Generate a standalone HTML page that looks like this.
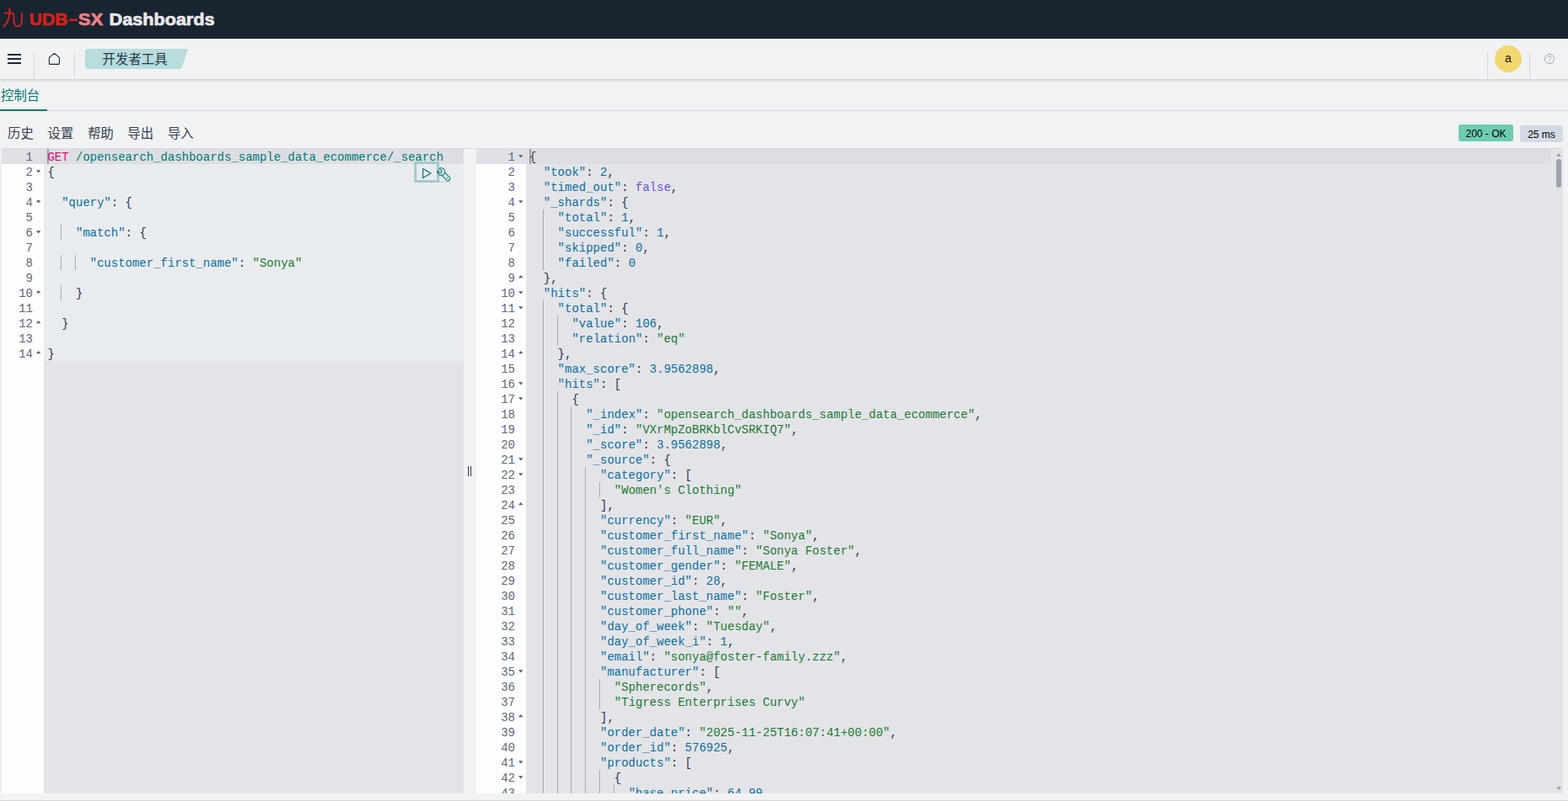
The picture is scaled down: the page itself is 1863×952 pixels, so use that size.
<!DOCTYPE html><html><head><meta charset="utf-8"><title>Dev Tools</title><style>

*{box-sizing:border-box;margin:0;padding:0}
html,body{width:1863px;height:952px;overflow:hidden;background:#f1f2f4;font-family:"Liberation Sans",sans-serif}
.abs{position:absolute}
#top{left:0;top:0;width:1863px;height:46px;background:#192431}
#hdr{left:0;top:46px;width:1863px;height:48px;background:#f1f2f4;box-shadow:0 1px 0 #d3d7dc,0 2px 2px rgba(80,100,110,.13),0 3px 3px rgba(80,100,110,.04)}
.sep{width:1px;background:#d5d8df;top:62px;height:32px}
svg{position:absolute;left:0;top:0;overflow:visible}
.code{font-family:"Liberation Mono",monospace;font-size:14px;line-height:18px;white-space:pre;color:#2b3648}
.code i{font-style:normal}
.ln{position:absolute;height:18px;left:0}
.k{color:#0b6e9e}.n{color:#0b6e9e}.s{color:#1c7a2e}.b{color:#6a55d5}.p{color:#2b3648}.m{color:#dd0a73}.u{color:#00797a}
.gn{position:absolute;text-align:right;color:#606876;height:18px}
.badge{position:absolute;font-size:12px;line-height:22px;height:20px;overflow:hidden;border-radius:3px;color:#000;text-align:center}

</style></head><body>
<div id="top" class="abs"></div>
<div id="hdr" class="abs"></div>
<div class="abs sep" style="left:40px"></div>
<div class="abs sep" style="left:88px"></div>
<div class="abs sep" style="left:1767px"></div>
<div class="abs sep" style="left:1817px"></div>
<div class="abs" style="left:0;top:131px;width:1863px;height:1px;background:#d6dae1"></div>
<div class="abs" style="left:0;top:130px;width:56px;height:2px;background:#00776e"></div>
<svg width="1863" height="952" viewBox="0 0 1863 952">
<path fill="#b8dddc" d="M105 58 H221.6 Q223.8 58 223 60.2 L216.2 79.4 Q215.2 82 212.4 82 H105 Q101 82 101 78 V62 Q101 58 105 58Z"/>
<text x="121.4" y="75.8" font-size="15.5" fill="#2a3a4c" font-family="&quot;Liberation Sans&quot;, &quot;Noto Sans CJK SC&quot;, sans-serif">开发者工具</text>
<text x="1" y="118.7" font-size="15.4" fill="#007a72" font-family="&quot;Liberation Sans&quot;, &quot;Noto Sans CJK SC&quot;, sans-serif">控制台</text>
<text x="9" y="163.5" font-size="15.4" fill="#343f4f" font-family="&quot;Liberation Sans&quot;, &quot;Noto Sans CJK SC&quot;, sans-serif">历史</text>
<text x="56.5" y="163.5" font-size="15.4" fill="#343f4f" font-family="&quot;Liberation Sans&quot;, &quot;Noto Sans CJK SC&quot;, sans-serif">设置</text>
<text x="104.2" y="163.5" font-size="15.4" fill="#343f4f" font-family="&quot;Liberation Sans&quot;, &quot;Noto Sans CJK SC&quot;, sans-serif">帮助</text>
<text x="151.6" y="163.5" font-size="15.4" fill="#343f4f" font-family="&quot;Liberation Sans&quot;, &quot;Noto Sans CJK SC&quot;, sans-serif">导出</text>
<text x="199.2" y="163.5" font-size="15.4" fill="#343f4f" font-family="&quot;Liberation Sans&quot;, &quot;Noto Sans CJK SC&quot;, sans-serif">导入</text>
<path fill="none" stroke="#d4211b" stroke-width="1.9" stroke-linecap="round" stroke-linejoin="round" d="M11.4 10.2 C11.4 18.5 10.8 26 4.3 31.4 M5.6 15.6 H14.2 C16 15.6 16.2 16.4 16.2 18 C16.2 22 16.2 24 16.7 26.6 C17.4 30 19 31.4 20.6 31.4 C24.6 31.4 26 28.5 26 24 V15.4"/>
<text x="34.8" y="30" font-size="20.7" font-weight="bold" fill="#d4211b" stroke="#d4211b" stroke-width="0.7" stroke-linejoin="round" textLength="45.6" lengthAdjust="spacingAndGlyphs" font-family="&quot;Liberation Sans&quot;, sans-serif">UDB</text>
<rect x="82.3" y="22.4" width="9.7" height="2.6" fill="#d4211b"/>
<text x="93" y="30" font-size="20.7" font-weight="bold" fill="#f07f87" stroke="#f07f87" stroke-width="0.7" stroke-linejoin="round" textLength="29.3" lengthAdjust="spacingAndGlyphs" font-family="&quot;Liberation Sans&quot;, sans-serif">SX</text>
<text x="129.8" y="30" font-size="20.7" font-weight="bold" fill="#e9e9e9" stroke="#e9e9e9" stroke-width="0.7" stroke-linejoin="round" textLength="125.2" lengthAdjust="spacingAndGlyphs" font-family="&quot;Liberation Sans&quot;, sans-serif">Dashboards</text>
<path fill="#1b2a3b" d="M9 64h16v2H9zM9 69h16v2H9zM9 74h16v2H9z"/>
<path fill="none" stroke="#1b2a3b" stroke-width="1.1" stroke-linejoin="round" d="M58.5 68.4 L64.5 63.4 L70.5 68.4 V75.4 Q70.5 76.4 69.5 76.4 H59.5 Q58.5 76.4 58.5 75.4 Z"/>
<circle cx="1792" cy="70" r="16" fill="#f1d86f"/>
<circle cx="1841" cy="70" r="5.6" fill="none" stroke="#a3abb6" stroke-width="1"/>
<path fill="none" stroke="#a3abb6" stroke-width="1" stroke-linecap="round" d="M1839.2 68.3 C1839.2 66.4 1842.9 66.4 1842.9 68.4 C1842.9 69.8 1841 69.9 1841 71.4"/><circle cx="1841" cy="73.1" r=".6" fill="#a3abb6"/>
</svg>
<div class="abs" style="left:1776px;top:54px;width:32px;height:32px;line-height:30px;text-align:center;font-size:14px;color:#111">a</div>
<div class="badge" style="left:1733px;top:148px;width:65px;background:#6dccb1">200 - OK</div>
<div class="badge" style="left:1806px;top:149px;width:51px;background:#d3dae6">25 ms</div>
<div class="abs" style="left:2px;top:177px;width:549px;height:766px;background:#e3e4e8;overflow:hidden">
<div class="abs" style="left:50px;top:0;width:499px;height:252px;background:#e9ecef"></div>
<div class="abs" style="left:0;top:0;width:549px;height:18px;background:#dcdee3"></div>
<div class="abs" style="left:0;top:18px;width:50px;height:766px;background:#fdfdfe"></div>
<div class="abs" style="left:0;top:0;width:50px;height:18px;background:#dfe1e6"></div>
<div class="abs" style="left:54px;top:0;width:2px;height:18px;background:#999da6"></div>
<div class="abs" style="left:70px;top:90px;width:1px;height:18px;background:#a6a9b0"></div>
<div class="abs" style="left:70px;top:126px;width:1px;height:18px;background:#a6a9b0"></div>
<div class="abs" style="left:87px;top:126px;width:1px;height:18px;background:#a6a9b0"></div>
<div class="abs" style="left:70px;top:162px;width:1px;height:18px;background:#a6a9b0"></div>
<div class="code abs" style="left:54.4px;top:1px">
<div class="ln" style="top:0px"><i class="m">GET</i> <i class="u">/opensearch_dashboards_sample_data_ecommerce/_search</i></div>
<div class="ln" style="top:18px"><i class="p">{</i></div>
<div class="ln" style="top:54px">  <i class="k">"query"</i><i class="p">:</i> <i class="p">{</i></div>
<div class="ln" style="top:90px">    <i class="k">"match"</i><i class="p">:</i> <i class="p">{</i></div>
<div class="ln" style="top:126px">      <i class="k">"customer_first_name"</i><i class="p">:</i> <i class="s">"Sonya"</i></div>
<div class="ln" style="top:162px">    <i class="p">}</i></div>
<div class="ln" style="top:198px">  <i class="p">}</i></div>
<div class="ln" style="top:234px"><i class="p">}</i></div>
</div>
<div class="code abs" style="left:0;top:1px;width:37px">
<div class="gn" style="top:0px;right:0">1</div>
<div class="gn" style="top:18px;right:0">2</div>
<div class="gn" style="top:36px;right:0">3</div>
<div class="gn" style="top:54px;right:0">4</div>
<div class="gn" style="top:72px;right:0">5</div>
<div class="gn" style="top:90px;right:0">6</div>
<div class="gn" style="top:108px;right:0">7</div>
<div class="gn" style="top:126px;right:0">8</div>
<div class="gn" style="top:144px;right:0">9</div>
<div class="gn" style="top:162px;right:0">10</div>
<div class="gn" style="top:180px;right:0">11</div>
<div class="gn" style="top:198px;right:0">12</div>
<div class="gn" style="top:216px;right:0">13</div>
<div class="gn" style="top:234px;right:0">14</div>
</div>
<svg width="549" height="766"><path fill="#5a5e66" d="M41 25.2 h5.4 l-2.7 3.2z M41 61.2 h5.4 l-2.7 3.2z M41 97.2 h5.4 l-2.7 3.2z M41 171.2 h5.4 l-2.7 -3.3z M41 207.2 h5.4 l-2.7 -3.3z M41 243.2 h5.4 l-2.7 -3.3z"/></svg>
</div>
<div class="abs" style="left:566px;top:177px;width:1291px;height:766px;background:#e3e4e8;overflow:hidden">
<div class="abs" style="left:0;top:0;width:1276px;height:18px;background:#dcdee3"></div>
<div class="abs" style="left:0;top:18px;width:59px;height:766px;background:#fdfdfe"></div>
<div class="abs" style="left:0;top:0;width:59px;height:18px;background:#dfe1e6"></div>
<div class="abs" style="left:1283px;top:12px;width:6px;height:34px;border-radius:3px;background:#9aa2ae"></div>
<svg width="1291" height="766"><path fill="#9aa2ae" d="M1283.2 9 l2.9 -4 l2.9 4z M1283.2 758 l2.9 4.1 l2.9 -4.1z"/></svg>
<div class="abs" style="left:63px;top:0;width:2px;height:18px;background:#999da6"></div>
<div class="abs" style="left:79px;top:72px;width:1px;height:18px;background:#a6a9b0"></div>
<div class="abs" style="left:79px;top:90px;width:1px;height:18px;background:#a6a9b0"></div>
<div class="abs" style="left:79px;top:108px;width:1px;height:18px;background:#a6a9b0"></div>
<div class="abs" style="left:79px;top:126px;width:1px;height:18px;background:#a6a9b0"></div>
<div class="abs" style="left:79px;top:180px;width:1px;height:18px;background:#a6a9b0"></div>
<div class="abs" style="left:79px;top:198px;width:1px;height:18px;background:#a6a9b0"></div>
<div class="abs" style="left:96px;top:198px;width:1px;height:18px;background:#a6a9b0"></div>
<div class="abs" style="left:79px;top:216px;width:1px;height:18px;background:#a6a9b0"></div>
<div class="abs" style="left:96px;top:216px;width:1px;height:18px;background:#a6a9b0"></div>
<div class="abs" style="left:79px;top:234px;width:1px;height:18px;background:#a6a9b0"></div>
<div class="abs" style="left:79px;top:252px;width:1px;height:18px;background:#a6a9b0"></div>
<div class="abs" style="left:79px;top:270px;width:1px;height:18px;background:#a6a9b0"></div>
<div class="abs" style="left:79px;top:288px;width:1px;height:18px;background:#a6a9b0"></div>
<div class="abs" style="left:96px;top:288px;width:1px;height:18px;background:#a6a9b0"></div>
<div class="abs" style="left:79px;top:306px;width:1px;height:18px;background:#a6a9b0"></div>
<div class="abs" style="left:96px;top:306px;width:1px;height:18px;background:#a6a9b0"></div>
<div class="abs" style="left:112px;top:306px;width:1px;height:18px;background:#a6a9b0"></div>
<div class="abs" style="left:79px;top:324px;width:1px;height:18px;background:#a6a9b0"></div>
<div class="abs" style="left:96px;top:324px;width:1px;height:18px;background:#a6a9b0"></div>
<div class="abs" style="left:112px;top:324px;width:1px;height:18px;background:#a6a9b0"></div>
<div class="abs" style="left:79px;top:342px;width:1px;height:18px;background:#a6a9b0"></div>
<div class="abs" style="left:96px;top:342px;width:1px;height:18px;background:#a6a9b0"></div>
<div class="abs" style="left:112px;top:342px;width:1px;height:18px;background:#a6a9b0"></div>
<div class="abs" style="left:79px;top:360px;width:1px;height:18px;background:#a6a9b0"></div>
<div class="abs" style="left:96px;top:360px;width:1px;height:18px;background:#a6a9b0"></div>
<div class="abs" style="left:112px;top:360px;width:1px;height:18px;background:#a6a9b0"></div>
<div class="abs" style="left:79px;top:378px;width:1px;height:18px;background:#a6a9b0"></div>
<div class="abs" style="left:96px;top:378px;width:1px;height:18px;background:#a6a9b0"></div>
<div class="abs" style="left:112px;top:378px;width:1px;height:18px;background:#a6a9b0"></div>
<div class="abs" style="left:129px;top:378px;width:1px;height:18px;background:#a6a9b0"></div>
<div class="abs" style="left:79px;top:396px;width:1px;height:18px;background:#a6a9b0"></div>
<div class="abs" style="left:96px;top:396px;width:1px;height:18px;background:#a6a9b0"></div>
<div class="abs" style="left:112px;top:396px;width:1px;height:18px;background:#a6a9b0"></div>
<div class="abs" style="left:129px;top:396px;width:1px;height:18px;background:#a6a9b0"></div>
<div class="abs" style="left:146px;top:396px;width:1px;height:18px;background:#a6a9b0"></div>
<div class="abs" style="left:79px;top:414px;width:1px;height:18px;background:#a6a9b0"></div>
<div class="abs" style="left:96px;top:414px;width:1px;height:18px;background:#a6a9b0"></div>
<div class="abs" style="left:112px;top:414px;width:1px;height:18px;background:#a6a9b0"></div>
<div class="abs" style="left:129px;top:414px;width:1px;height:18px;background:#a6a9b0"></div>
<div class="abs" style="left:79px;top:432px;width:1px;height:18px;background:#a6a9b0"></div>
<div class="abs" style="left:96px;top:432px;width:1px;height:18px;background:#a6a9b0"></div>
<div class="abs" style="left:112px;top:432px;width:1px;height:18px;background:#a6a9b0"></div>
<div class="abs" style="left:129px;top:432px;width:1px;height:18px;background:#a6a9b0"></div>
<div class="abs" style="left:79px;top:450px;width:1px;height:18px;background:#a6a9b0"></div>
<div class="abs" style="left:96px;top:450px;width:1px;height:18px;background:#a6a9b0"></div>
<div class="abs" style="left:112px;top:450px;width:1px;height:18px;background:#a6a9b0"></div>
<div class="abs" style="left:129px;top:450px;width:1px;height:18px;background:#a6a9b0"></div>
<div class="abs" style="left:79px;top:468px;width:1px;height:18px;background:#a6a9b0"></div>
<div class="abs" style="left:96px;top:468px;width:1px;height:18px;background:#a6a9b0"></div>
<div class="abs" style="left:112px;top:468px;width:1px;height:18px;background:#a6a9b0"></div>
<div class="abs" style="left:129px;top:468px;width:1px;height:18px;background:#a6a9b0"></div>
<div class="abs" style="left:79px;top:486px;width:1px;height:18px;background:#a6a9b0"></div>
<div class="abs" style="left:96px;top:486px;width:1px;height:18px;background:#a6a9b0"></div>
<div class="abs" style="left:112px;top:486px;width:1px;height:18px;background:#a6a9b0"></div>
<div class="abs" style="left:129px;top:486px;width:1px;height:18px;background:#a6a9b0"></div>
<div class="abs" style="left:79px;top:504px;width:1px;height:18px;background:#a6a9b0"></div>
<div class="abs" style="left:96px;top:504px;width:1px;height:18px;background:#a6a9b0"></div>
<div class="abs" style="left:112px;top:504px;width:1px;height:18px;background:#a6a9b0"></div>
<div class="abs" style="left:129px;top:504px;width:1px;height:18px;background:#a6a9b0"></div>
<div class="abs" style="left:79px;top:522px;width:1px;height:18px;background:#a6a9b0"></div>
<div class="abs" style="left:96px;top:522px;width:1px;height:18px;background:#a6a9b0"></div>
<div class="abs" style="left:112px;top:522px;width:1px;height:18px;background:#a6a9b0"></div>
<div class="abs" style="left:129px;top:522px;width:1px;height:18px;background:#a6a9b0"></div>
<div class="abs" style="left:79px;top:540px;width:1px;height:18px;background:#a6a9b0"></div>
<div class="abs" style="left:96px;top:540px;width:1px;height:18px;background:#a6a9b0"></div>
<div class="abs" style="left:112px;top:540px;width:1px;height:18px;background:#a6a9b0"></div>
<div class="abs" style="left:129px;top:540px;width:1px;height:18px;background:#a6a9b0"></div>
<div class="abs" style="left:79px;top:558px;width:1px;height:18px;background:#a6a9b0"></div>
<div class="abs" style="left:96px;top:558px;width:1px;height:18px;background:#a6a9b0"></div>
<div class="abs" style="left:112px;top:558px;width:1px;height:18px;background:#a6a9b0"></div>
<div class="abs" style="left:129px;top:558px;width:1px;height:18px;background:#a6a9b0"></div>
<div class="abs" style="left:79px;top:576px;width:1px;height:18px;background:#a6a9b0"></div>
<div class="abs" style="left:96px;top:576px;width:1px;height:18px;background:#a6a9b0"></div>
<div class="abs" style="left:112px;top:576px;width:1px;height:18px;background:#a6a9b0"></div>
<div class="abs" style="left:129px;top:576px;width:1px;height:18px;background:#a6a9b0"></div>
<div class="abs" style="left:79px;top:594px;width:1px;height:18px;background:#a6a9b0"></div>
<div class="abs" style="left:96px;top:594px;width:1px;height:18px;background:#a6a9b0"></div>
<div class="abs" style="left:112px;top:594px;width:1px;height:18px;background:#a6a9b0"></div>
<div class="abs" style="left:129px;top:594px;width:1px;height:18px;background:#a6a9b0"></div>
<div class="abs" style="left:79px;top:612px;width:1px;height:18px;background:#a6a9b0"></div>
<div class="abs" style="left:96px;top:612px;width:1px;height:18px;background:#a6a9b0"></div>
<div class="abs" style="left:112px;top:612px;width:1px;height:18px;background:#a6a9b0"></div>
<div class="abs" style="left:129px;top:612px;width:1px;height:18px;background:#a6a9b0"></div>
<div class="abs" style="left:79px;top:630px;width:1px;height:18px;background:#a6a9b0"></div>
<div class="abs" style="left:96px;top:630px;width:1px;height:18px;background:#a6a9b0"></div>
<div class="abs" style="left:112px;top:630px;width:1px;height:18px;background:#a6a9b0"></div>
<div class="abs" style="left:129px;top:630px;width:1px;height:18px;background:#a6a9b0"></div>
<div class="abs" style="left:146px;top:630px;width:1px;height:18px;background:#a6a9b0"></div>
<div class="abs" style="left:79px;top:648px;width:1px;height:18px;background:#a6a9b0"></div>
<div class="abs" style="left:96px;top:648px;width:1px;height:18px;background:#a6a9b0"></div>
<div class="abs" style="left:112px;top:648px;width:1px;height:18px;background:#a6a9b0"></div>
<div class="abs" style="left:129px;top:648px;width:1px;height:18px;background:#a6a9b0"></div>
<div class="abs" style="left:146px;top:648px;width:1px;height:18px;background:#a6a9b0"></div>
<div class="abs" style="left:79px;top:666px;width:1px;height:18px;background:#a6a9b0"></div>
<div class="abs" style="left:96px;top:666px;width:1px;height:18px;background:#a6a9b0"></div>
<div class="abs" style="left:112px;top:666px;width:1px;height:18px;background:#a6a9b0"></div>
<div class="abs" style="left:129px;top:666px;width:1px;height:18px;background:#a6a9b0"></div>
<div class="abs" style="left:79px;top:684px;width:1px;height:18px;background:#a6a9b0"></div>
<div class="abs" style="left:96px;top:684px;width:1px;height:18px;background:#a6a9b0"></div>
<div class="abs" style="left:112px;top:684px;width:1px;height:18px;background:#a6a9b0"></div>
<div class="abs" style="left:129px;top:684px;width:1px;height:18px;background:#a6a9b0"></div>
<div class="abs" style="left:79px;top:702px;width:1px;height:18px;background:#a6a9b0"></div>
<div class="abs" style="left:96px;top:702px;width:1px;height:18px;background:#a6a9b0"></div>
<div class="abs" style="left:112px;top:702px;width:1px;height:18px;background:#a6a9b0"></div>
<div class="abs" style="left:129px;top:702px;width:1px;height:18px;background:#a6a9b0"></div>
<div class="abs" style="left:79px;top:720px;width:1px;height:18px;background:#a6a9b0"></div>
<div class="abs" style="left:96px;top:720px;width:1px;height:18px;background:#a6a9b0"></div>
<div class="abs" style="left:112px;top:720px;width:1px;height:18px;background:#a6a9b0"></div>
<div class="abs" style="left:129px;top:720px;width:1px;height:18px;background:#a6a9b0"></div>
<div class="abs" style="left:79px;top:738px;width:1px;height:18px;background:#a6a9b0"></div>
<div class="abs" style="left:96px;top:738px;width:1px;height:18px;background:#a6a9b0"></div>
<div class="abs" style="left:112px;top:738px;width:1px;height:18px;background:#a6a9b0"></div>
<div class="abs" style="left:129px;top:738px;width:1px;height:18px;background:#a6a9b0"></div>
<div class="abs" style="left:146px;top:738px;width:1px;height:18px;background:#a6a9b0"></div>
<div class="abs" style="left:79px;top:756px;width:1px;height:18px;background:#a6a9b0"></div>
<div class="abs" style="left:96px;top:756px;width:1px;height:18px;background:#a6a9b0"></div>
<div class="abs" style="left:112px;top:756px;width:1px;height:18px;background:#a6a9b0"></div>
<div class="abs" style="left:129px;top:756px;width:1px;height:18px;background:#a6a9b0"></div>
<div class="abs" style="left:146px;top:756px;width:1px;height:18px;background:#a6a9b0"></div>
<div class="abs" style="left:163px;top:756px;width:1px;height:18px;background:#a6a9b0"></div>
<div class="code abs" style="left:63px;top:1px">
<div class="ln" style="top:0px"><i class="p">{</i></div>
<div class="ln" style="top:18px">  <i class="k">"took"</i><i class="p">:</i> <i class="n">2</i><i class="p">,</i></div>
<div class="ln" style="top:36px">  <i class="k">"timed_out"</i><i class="p">:</i> <i class="b">false</i><i class="p">,</i></div>
<div class="ln" style="top:54px">  <i class="k">"_shards"</i><i class="p">:</i> <i class="p">{</i></div>
<div class="ln" style="top:72px">    <i class="k">"total"</i><i class="p">:</i> <i class="n">1</i><i class="p">,</i></div>
<div class="ln" style="top:90px">    <i class="k">"successful"</i><i class="p">:</i> <i class="n">1</i><i class="p">,</i></div>
<div class="ln" style="top:108px">    <i class="k">"skipped"</i><i class="p">:</i> <i class="n">0</i><i class="p">,</i></div>
<div class="ln" style="top:126px">    <i class="k">"failed"</i><i class="p">:</i> <i class="n">0</i></div>
<div class="ln" style="top:144px">  <i class="p">}</i><i class="p">,</i></div>
<div class="ln" style="top:162px">  <i class="k">"hits"</i><i class="p">:</i> <i class="p">{</i></div>
<div class="ln" style="top:180px">    <i class="k">"total"</i><i class="p">:</i> <i class="p">{</i></div>
<div class="ln" style="top:198px">      <i class="k">"value"</i><i class="p">:</i> <i class="n">106</i><i class="p">,</i></div>
<div class="ln" style="top:216px">      <i class="k">"relation"</i><i class="p">:</i> <i class="s">"eq"</i></div>
<div class="ln" style="top:234px">    <i class="p">}</i><i class="p">,</i></div>
<div class="ln" style="top:252px">    <i class="k">"max_score"</i><i class="p">:</i> <i class="n">3.9562898</i><i class="p">,</i></div>
<div class="ln" style="top:270px">    <i class="k">"hits"</i><i class="p">:</i> <i class="p">[</i></div>
<div class="ln" style="top:288px">      <i class="p">{</i></div>
<div class="ln" style="top:306px">        <i class="k">"_index"</i><i class="p">:</i> <i class="s">"opensearch_dashboards_sample_data_ecommerce"</i><i class="p">,</i></div>
<div class="ln" style="top:324px">        <i class="k">"_id"</i><i class="p">:</i> <i class="s">"VXrMpZoBRKblCvSRKIQ7"</i><i class="p">,</i></div>
<div class="ln" style="top:342px">        <i class="k">"_score"</i><i class="p">:</i> <i class="n">3.9562898</i><i class="p">,</i></div>
<div class="ln" style="top:360px">        <i class="k">"_source"</i><i class="p">:</i> <i class="p">{</i></div>
<div class="ln" style="top:378px">          <i class="k">"category"</i><i class="p">:</i> <i class="p">[</i></div>
<div class="ln" style="top:396px">            <i class="s">"Women's Clothing"</i></div>
<div class="ln" style="top:414px">          <i class="p">]</i><i class="p">,</i></div>
<div class="ln" style="top:432px">          <i class="k">"currency"</i><i class="p">:</i> <i class="s">"EUR"</i><i class="p">,</i></div>
<div class="ln" style="top:450px">          <i class="k">"customer_first_name"</i><i class="p">:</i> <i class="s">"Sonya"</i><i class="p">,</i></div>
<div class="ln" style="top:468px">          <i class="k">"customer_full_name"</i><i class="p">:</i> <i class="s">"Sonya Foster"</i><i class="p">,</i></div>
<div class="ln" style="top:486px">          <i class="k">"customer_gender"</i><i class="p">:</i> <i class="s">"FEMALE"</i><i class="p">,</i></div>
<div class="ln" style="top:504px">          <i class="k">"customer_id"</i><i class="p">:</i> <i class="n">28</i><i class="p">,</i></div>
<div class="ln" style="top:522px">          <i class="k">"customer_last_name"</i><i class="p">:</i> <i class="s">"Foster"</i><i class="p">,</i></div>
<div class="ln" style="top:540px">          <i class="k">"customer_phone"</i><i class="p">:</i> <i class="s">""</i><i class="p">,</i></div>
<div class="ln" style="top:558px">          <i class="k">"day_of_week"</i><i class="p">:</i> <i class="s">"Tuesday"</i><i class="p">,</i></div>
<div class="ln" style="top:576px">          <i class="k">"day_of_week_i"</i><i class="p">:</i> <i class="n">1</i><i class="p">,</i></div>
<div class="ln" style="top:594px">          <i class="k">"email"</i><i class="p">:</i> <i class="s">"sonya@foster-family.zzz"</i><i class="p">,</i></div>
<div class="ln" style="top:612px">          <i class="k">"manufacturer"</i><i class="p">:</i> <i class="p">[</i></div>
<div class="ln" style="top:630px">            <i class="s">"Spherecords"</i><i class="p">,</i></div>
<div class="ln" style="top:648px">            <i class="s">"Tigress Enterprises Curvy"</i></div>
<div class="ln" style="top:666px">          <i class="p">]</i><i class="p">,</i></div>
<div class="ln" style="top:684px">          <i class="k">"order_date"</i><i class="p">:</i> <i class="s">"2025-11-25T16:07:41+00:00"</i><i class="p">,</i></div>
<div class="ln" style="top:702px">          <i class="k">"order_id"</i><i class="p">:</i> <i class="n">576925</i><i class="p">,</i></div>
<div class="ln" style="top:720px">          <i class="k">"products"</i><i class="p">:</i> <i class="p">[</i></div>
<div class="ln" style="top:738px">            <i class="p">{</i></div>
<div class="ln" style="top:756px">              <i class="k">"base_price"</i><i class="p">:</i> <i class="n">64.99</i><i class="p">,</i></div>
</div>
<div class="code abs" style="left:0;top:1px;width:46px">
<div class="gn" style="top:0px;right:0">1</div>
<div class="gn" style="top:18px;right:0">2</div>
<div class="gn" style="top:36px;right:0">3</div>
<div class="gn" style="top:54px;right:0">4</div>
<div class="gn" style="top:72px;right:0">5</div>
<div class="gn" style="top:90px;right:0">6</div>
<div class="gn" style="top:108px;right:0">7</div>
<div class="gn" style="top:126px;right:0">8</div>
<div class="gn" style="top:144px;right:0">9</div>
<div class="gn" style="top:162px;right:0">10</div>
<div class="gn" style="top:180px;right:0">11</div>
<div class="gn" style="top:198px;right:0">12</div>
<div class="gn" style="top:216px;right:0">13</div>
<div class="gn" style="top:234px;right:0">14</div>
<div class="gn" style="top:252px;right:0">15</div>
<div class="gn" style="top:270px;right:0">16</div>
<div class="gn" style="top:288px;right:0">17</div>
<div class="gn" style="top:306px;right:0">18</div>
<div class="gn" style="top:324px;right:0">19</div>
<div class="gn" style="top:342px;right:0">20</div>
<div class="gn" style="top:360px;right:0">21</div>
<div class="gn" style="top:378px;right:0">22</div>
<div class="gn" style="top:396px;right:0">23</div>
<div class="gn" style="top:414px;right:0">24</div>
<div class="gn" style="top:432px;right:0">25</div>
<div class="gn" style="top:450px;right:0">26</div>
<div class="gn" style="top:468px;right:0">27</div>
<div class="gn" style="top:486px;right:0">28</div>
<div class="gn" style="top:504px;right:0">29</div>
<div class="gn" style="top:522px;right:0">30</div>
<div class="gn" style="top:540px;right:0">31</div>
<div class="gn" style="top:558px;right:0">32</div>
<div class="gn" style="top:576px;right:0">33</div>
<div class="gn" style="top:594px;right:0">34</div>
<div class="gn" style="top:612px;right:0">35</div>
<div class="gn" style="top:630px;right:0">36</div>
<div class="gn" style="top:648px;right:0">37</div>
<div class="gn" style="top:666px;right:0">38</div>
<div class="gn" style="top:684px;right:0">39</div>
<div class="gn" style="top:702px;right:0">40</div>
<div class="gn" style="top:720px;right:0">41</div>
<div class="gn" style="top:738px;right:0">42</div>
<div class="gn" style="top:756px;right:0">43</div>
</div>
<svg width="1291" height="766"><path fill="#5a5e66" d="M50 7.2 h5.4 l-2.7 3.2z M50 61.2 h5.4 l-2.7 3.2z M50 169.2 h5.4 l-2.7 3.2z M50 187.2 h5.4 l-2.7 3.2z M50 277.2 h5.4 l-2.7 3.2z M50 295.2 h5.4 l-2.7 3.2z M50 367.2 h5.4 l-2.7 3.2z M50 385.2 h5.4 l-2.7 3.2z M50 619.2 h5.4 l-2.7 3.2z M50 727.2 h5.4 l-2.7 3.2z M50 745.2 h5.4 l-2.7 3.2z M50 153.2 h5.4 l-2.7 -3.3z M50 243.2 h5.4 l-2.7 -3.3z M50 423.2 h5.4 l-2.7 -3.3z M50 675.2 h5.4 l-2.7 -3.3z"/></svg>
</div>
<div class="abs" style="left:1px;top:176px;width:1856px;height:1px;background:#d9dbe0"></div>
<div class="abs" style="left:1px;top:177px;width:1px;height:766px;background:#e9eded"></div>
<div class="abs" style="left:0;top:951px;width:1863px;height:1px;background:#d9d9d9"></div>
<div class="abs" style="left:556px;top:554px;width:1px;height:12px;background:#343f4f"></div>
<div class="abs" style="left:559px;top:554px;width:1px;height:12px;background:#343f4f"></div>
<svg width="1863" height="952" viewBox="0 0 1863 952">
<rect x="520" y="215.6" width="15" height="1.2" fill="#5a6b70" opacity=".22"/>
<rect x="493.5" y="193.5" width="27" height="22" fill="none" stroke="#a3cbca" stroke-width="3"/>
<path fill="none" stroke="#07776f" stroke-width="1.2" stroke-linejoin="round" d="M502.5 200.5 L511.9 205.9 L502.5 211.6 Z"/>
<g fill="none" stroke="#07776f" stroke-width="1.05" stroke-linecap="round" stroke-linejoin="round"><path d="M528.72 205.1 L534.03 210.67 A2.45 2.45 0 0 1 530.57 214.13 L525.25 208.57"/><path d="M519.88 202.94 A4.4 4.4 0 1 0 522.02 200.15 L524.5 202.62 A1.75 1.75 0 0 1 521.93 204.99 Z"/></g><circle cx="531.2" cy="211.2" r=".8" fill="#07776f"/>
</svg>
</body></html>
